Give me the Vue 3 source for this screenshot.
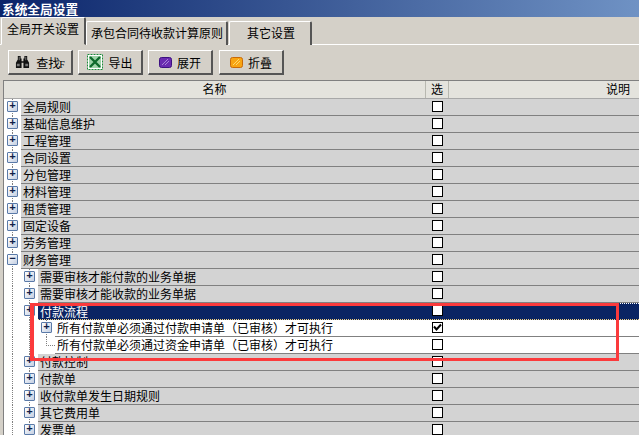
<script setup>
const tabs = [
  { label: '全局开关设置', active: true },
  { label: '承包合同待收款计算原则' },
  { label: '其它设置' }
]
const rows = [
  { t: '全局规则', l: 0, e: '+' },
  { t: '基础信息维护', l: 0, e: '+' },
  { t: '工程管理', l: 0, e: '+' },
  { t: '合同设置', l: 0, e: '+' },
  { t: '分包管理', l: 0, e: '+' },
  { t: '材料管理', l: 0, e: '+' },
  { t: '租赁管理', l: 0, e: '+' },
  { t: '固定设备', l: 0, e: '+' },
  { t: '劳务管理', l: 0, e: '+' },
  { t: '财务管理', l: 0, e: '-' },
  { t: '需要审核才能付款的业务单据', l: 1, e: '+' },
  { t: '需要审核才能收款的业务单据', l: 1, e: '+' },
  { t: '付款流程', l: 1, e: '+', sel: true },
  { t: '所有付款单必须通过付款申请单（已审核）才可执行', l: 2, e: '+', white: true, checked: true },
  { t: '所有付款单必须通过资金申请单（已审核）才可执行', l: 2, e: '', white: true },
  { t: '付款控制', l: 1, e: '+' },
  { t: '付款单', l: 1, e: '+' },
  { t: '收付款单发生日期规则', l: 1, e: '+' },
  { t: '其它费用单', l: 1, e: '+' },
  { t: '发票单', l: 1, e: '+' }
]
</script>

<template>
  <div class="win">
    <div class="title">系统全局设置</div>
    <div class="tabbar">
      <div v-for="tab in tabs" :key="tab.label" class="tab" :class="{ on: tab.active }">{{ tab.label }}</div>
    </div>
    <div class="toolbar">
      <button class="btn find">
        <svg width="15" height="12" viewBox="0 0 16 14" preserveAspectRatio="none"><path d="M3 0h3v3h1v3h2V3h1V0h3v4l2 4v6h-6V8H7v6H1V8l2-4z" fill="#111"/><path d="M2 9h3v3H2zM11 9h3v3h-3z" fill="#777"/><path d="M4 1h1v4H4zM11 1h1v4h-1z" fill="#777"/></svg>
        <span>查找<i class="acc">F</i></span>
      </button>
      <button class="btn">
        <svg width="16" height="16" viewBox="0 0 16 16"><rect x=".5" y=".5" width="15" height="15" fill="#fff" stroke="#1c8a3a" stroke-dasharray="2 1"/><rect x="2" y="2" width="12" height="12" fill="#9ed3a8"/><path d="M3 3l10 10M13 3L3 13" stroke="#0d6a2b" stroke-width="2.4"/></svg>
        <span>导出</span>
      </button>
      <button class="btn">
        <svg width="13" height="11" viewBox="0 0 13 11"><rect x=".5" y=".5" width="12" height="10" rx="2" fill="#6a2ab0" stroke="#3c1080"/><path d="M3 8l6-6M6 8l4-4" stroke="#a884d8"/></svg>
        <span>展开</span>
      </button>
      <button class="btn last">
        <svg width="13" height="11" viewBox="0 0 13 11"><rect x=".5" y=".5" width="12" height="10" rx="2" fill="#f8a412" stroke="#c86a08"/><path d="M3 8l6-6M6 8l4-4" stroke="#ffd86a"/></svg>
        <span>折叠</span>
      </button>
    </div>
    <div class="grid">
      <div class="head">
        <div class="h-name">名称</div>
        <div class="h-sel">选</div>
        <div class="h-note">说明</div>
      </div>
      <div v-for="r in rows" :key="r.t" class="row">
        <div class="gutter" :class="'lv' + r.l">
          <span v-for="n in r.l + 1" :key="n" class="cell" :class="{ end: n === r.l + 1 && !r.e }">
            <span v-if="n === r.l + 1 && r.e" class="exp">{{ r.e === '+' ? '+' : '−' }}</span>
            <span v-if="n === r.l + 1 && !r.e" class="elbow"></span>
          </span>
        </div>
        <div class="body" :class="{ sel: r.sel, white: r.white }">
          <div class="txt">{{ r.t }}</div>
          <div class="chk-col"><span class="chk"><svg v-if="r.checked" width="9" height="9" viewBox="0 0 9 9"><path d="M1 3.5l2.5 3L8 1.5" fill="none" stroke="#000" stroke-width="2"/></svg></span></div>
        </div>
      </div>
      <div class="mark"></div>
    </div>
  </div>
</template>

<style>
html, body { margin: 0; overflow: hidden; }
</style>

<style scoped>
.win {
  position: relative;
  width: 639px;
  height: 435px;
  overflow: hidden;
  background: #d4d0c8;
  font: 12px/17px "Noto Sans CJK SC", "Liberation Sans", sans-serif;
  color: #000;
}
.title {
  height: 17px;
  padding-left: 2px;
  background: linear-gradient(90deg, #0a246a, #6f92c4);
  color: #fff;
  font-weight: 700;
  font-size: 12.7px;
  line-height: 17px;
}
.tabbar {
  display: flex;
  align-items: flex-end;
  height: 27px;
  padding-left: 1px;
  border-bottom: 1px solid #fff;
}
.tab {
  height: 23px;
  margin-bottom: -1px;
  margin-right: 1px;
  padding: 0 3px 0 4px;
  line-height: 22px;
  border-top: 1px solid #fff;
  border-left: 1px solid #fff;
  border-right: 2px solid #555;
  border-radius: 2px 2px 0 0;
  background: #d4d0c8;
}
.tab.on {
  height: 26px;
  margin-right: 0;
  padding: 0 5px;
  line-height: 22px;
  border-bottom: 1px solid #d4d0c8;
}
.tab:nth-child(3) { padding: 0 15px 0 17px; }
.toolbar {
  display: flex;
  gap: 5px;
  height: 30px;
  padding: 5px 0 0 8px;
  box-sizing: border-box;
}
.btn {
  display: flex;
  align-items: center;
  justify-content: center;
  gap: 5px;
  width: 65px;
  height: 25px;
  padding: 0;
  font: inherit;
  background: #d4d0c8;
  border: 0;
  border-top: 1px solid #fff;
  border-left: 1px solid #fff;
  border-right: 2px solid #555;
  border-bottom: 2px solid #555;
}
.find { gap: 6px; }
.last { margin-left: 1px; }
.acc { font: 10px "Liberation Serif", serif; margin-left: -1px; }
.grid {
  position: relative;
  margin: 5px 0 0 3px;
  border-top: 1px solid #808080;
  border-left: 1px solid #808080;
  background: #fff;
}
.head {
  display: flex;
  height: 17px;
  background: #e4e3dd;
  border-bottom: 1px solid #a8a8a8;
  line-height: 15px;
}
.h-name { width: 421px; text-align: center; }
.h-sel {
  width: 22px;
  text-align: center;
  border-left: 1px solid #b8b8b0;
  border-right: 1px solid #b8b8b0;
}
.h-note { flex: 1; text-align: right; padding-right: 9px; }
.row { display: flex; height: 17px; }
.gutter { display: flex; background: #fff; }
.cell {
  position: relative;
  display: block;
  width: 17px;
  height: 17px;
}
.cell::before {
  content: "";
  position: absolute;
  left: 8px;
  top: 0;
  bottom: 0;
  border-left: 1px dotted #808080;
}
.cell.end::before { bottom: 8px; }
.exp {
  position: absolute;
  left: 3px;
  top: 2px;
  width: 11px;
  height: 11px;
  box-sizing: border-box;
  border: 1px solid #5a7aa8;
  border-radius: 1px;
  background: linear-gradient(135deg, #fff, #c4cfe2);
  color: #102048;
  font: 700 11px/8px "Liberation Mono", monospace;
  text-align: center;
}
.elbow {
  position: absolute;
  left: 8px;
  top: 8px;
  width: 9px;
  border-top: 1px dotted #808080;
}
.body {
  flex: 1;
  display: flex;
  background: #d3d3d3;
  border-bottom: 1px solid #808080;
  box-sizing: border-box;
}
.body.white { background: #fff; }
.body.sel {
  background: #0a2463;
  color: #fff;
  border-top: 1px dotted #fff;
  border-bottom: 1px dotted #f0d080;
}
.txt {
  padding-left: 2px;
  white-space: nowrap;
  line-height: 15px;
  box-sizing: border-box;
}
.lv0 + .body .txt { width: 404px; }
.lv1 + .body .txt { width: 387px; }
.lv2 + .body .txt { width: 370px; }
.chk-col { display: flex; padding: 2px 0 0 7px; }
.sel .chk-col { padding-top: 1px; }
.chk {
  display: flex;
  align-items: center;
  justify-content: center;
  width: 9px;
  height: 9px;
  background: #fff;
  border: 1px solid #000;
}
.mark {
  position: absolute;
  left: 26px;
  top: 222px;
  width: 589px;
  height: 58px;
  box-sizing: border-box;
  border: 3px solid #fb3a3c;
  border-left-width: 4px;
}
</style>
